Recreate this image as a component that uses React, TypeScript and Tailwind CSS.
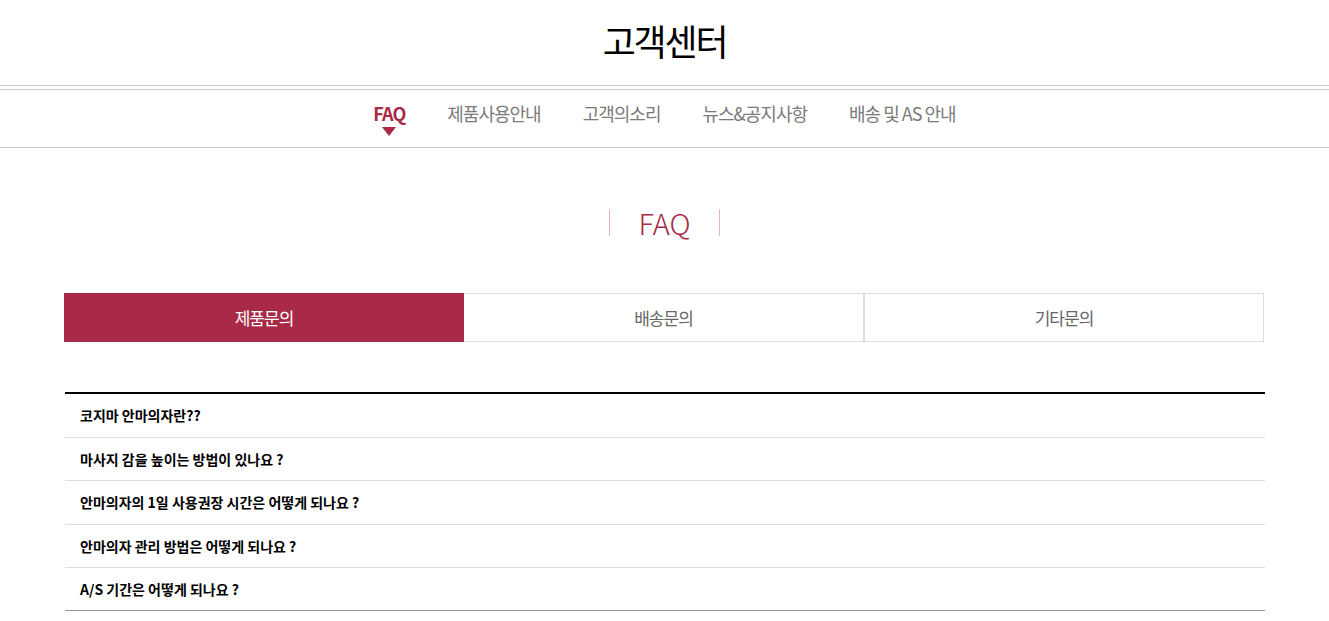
const NAV = ["FAQ", "제품사용안내", "고객의소리", "뉴스&공지사항", "배송 및 AS 안내"];
const TABS = ["제품문의", "배송문의", "기타문의"];
const QUESTIONS = [
  "코지마 안마의자란??",
  "마사지 감을 높이는 방법이 있나요 ?",
  "안마의자의 1일 사용권장 시간은 어떻게 되나요 ?",
  "안마의자 관리 방법은 어떻게 되나요 ?",
  "A/S 기간은 어떻게 되나요 ?",
];
// border-box heights, border included
const ROW_H = ["h-[44px]", "h-[43px]", "h-[44px]", "h-[43px]", "h-[43px]"];

export default function App() {
  return (
    <div
      className="min-h-screen bg-white"
      style={{ fontFamily: '"Noto Sans CJK KR", "Noto Sans", sans-serif' }}
    >
      {/* Title */}
      <header className="flex h-[85px] items-start justify-center pt-[13px]">
        <h1 className="text-[36px] font-normal tracking-[-2.2px] text-black">고객센터</h1>
      </header>

      {/* Sub nav */}
      <nav className="border-t border-[#c8c8c8]">
        <div className="mt-[3px] flex h-[59px] items-start justify-center gap-[42px] border-t border-b border-[#c8c8c8] pt-[10px]">
          {NAV.map((item, i) => (
            <div key={item} className="relative flex flex-col items-center">
              <span
                className={
                  i === 0
                    ? "text-[18px] font-bold tracking-[-1px] text-[#a82a46]"
                    : "text-[18px] tracking-[-1px] text-[#7a7a7a]"
                }
              >
                {item}
              </span>
              {i === 0 && (
                <span className="absolute top-[27px] h-0 w-0 border-x-[7px] border-t-[9px] border-x-transparent border-t-[#a82a46]" />
              )}
            </div>
          ))}
        </div>
      </nav>

      {/* Section heading */}
      <div className="mt-[60px] flex items-center justify-center">
        <span className="h-[27px] w-px bg-[#e8b4c0]" />
        <h2 className="w-[109px] text-center text-[29px] font-light leading-none text-[#a82a46]">
          FAQ
        </h2>
        <span className="h-[27px] w-px bg-[#e8b4c0]" />
      </div>

      {/* Tabs */}
      <div className="mx-[64px] mt-[56px] grid w-[1200px] grid-cols-3">
        {TABS.map((tab, i) => (
          <button
            key={tab}
            type="button"
            className={
              i === 0
                ? "h-[49px] bg-[#a82a46] text-[17px] tracking-[-1px] text-white"
                : i === 1
                  ? "h-[49px] border border-l-0 border-[#dddddd] text-[17px] tracking-[-1px] text-[#666]"
                  : "h-[49px] border border-[#dddddd] text-[17px] tracking-[-1px] text-[#666]"
            }
          >
            {tab}
          </button>
        ))}
      </div>

      {/* Question list */}
      <ul className="mx-[65px] mt-[50px] w-[1200px] border-t-2 border-black">
        {QUESTIONS.map((q, i) => (
          <li
            key={q}
            className={`flex items-center border-b pl-[15px] text-[14px] font-bold text-black ${ROW_H[i]} ${
              i === QUESTIONS.length - 1 ? "border-[#999]" : "border-[#dddddd]"
            }`}
          >
            {q}
          </li>
        ))}
      </ul>
    </div>
  );
}
